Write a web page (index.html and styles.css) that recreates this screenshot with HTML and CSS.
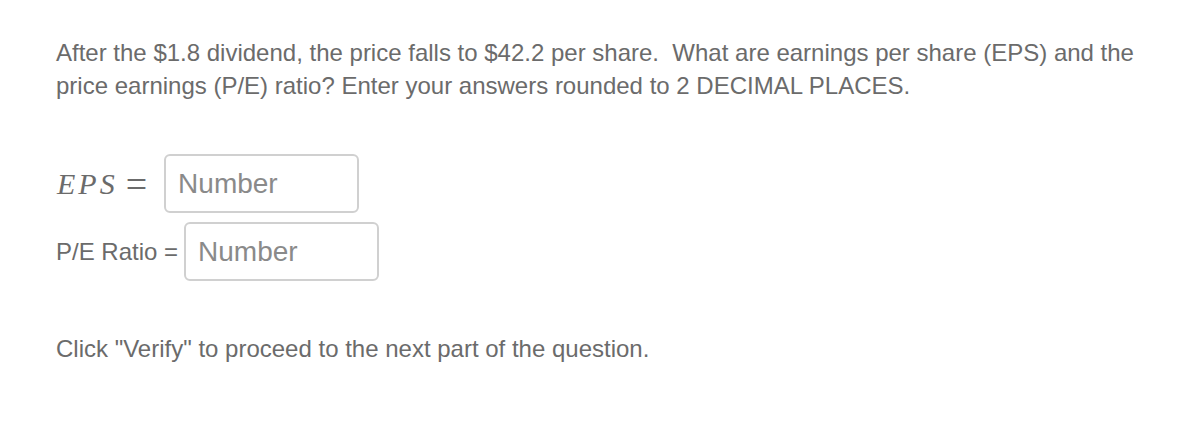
FILE: index.html
```html
<!DOCTYPE html>
<html>
<head>
<meta charset="utf-8">
<link rel="stylesheet" href="styles.css">
</head>
<body>
<div class="question">
  <p class="prompt">After the $1.8 dividend, the price falls to $42.2 per share.&nbsp; What are earnings per share (EPS) and the price earnings (P/E) ratio? Enter your answers rounded to 2 DECIMAL PLACES.</p>
  <div class="answers">
    <div class="row">
      <span class="math"><i class="var">EPS</i><span class="eq">=</span></span>
      <input class="num" type="text" placeholder="Number">
    </div>
    <div class="row">
      <span class="label">P/E Ratio =</span>
      <input class="num" type="text" placeholder="Number">
    </div>
  </div>
  <p class="note">Click "Verify" to proceed to the next part of the question.</p>
</div>
</body>
</html>
```
FILE: styles.css
```css
html, body {
  margin: 0;
  padding: 0;
  background: #ffffff;
}
body {
  font-family: "Liberation Sans", Arial, sans-serif;
  color: #6b6b6b;
}
.question {
  padding: 36px 40px 0 56px;
}
.prompt {
  margin: 0;
  font-size: 24px;
  line-height: 33px;
}
.answers {
  margin-top: 52px;
  display: flex;
  flex-direction: column;
  gap: 9px;
}
.row {
  display: flex;
  align-items: center;
}
.math {
  font-family: "Liberation Serif", "Times New Roman", serif;
  display: flex;
  align-items: center;
  margin-right: 17px;
}
.var {
  font-style: italic;
  font-size: 30px;
  letter-spacing: 3px;
  margin-left: 1px;
}
.eq {
  font-style: normal;
  font-size: 38px;
  line-height: 1;
  margin-left: 8px;
}
.label {
  font-size: 24px;
  margin-right: 6px;
}
.num {
  box-sizing: border-box;
  width: 195px;
  height: 59px;
  border: 2px solid #d0d0d0;
  border-radius: 6px;
  padding: 0 12px;
  font-family: "Liberation Sans", Arial, sans-serif;
  font-size: 28px;
  color: #555;
  outline: none;
}
.num::placeholder {
  color: #8a8a8a;
}
.note {
  margin: 51px 0 0 0;
  font-size: 24px;
  line-height: 33px;
}
```
